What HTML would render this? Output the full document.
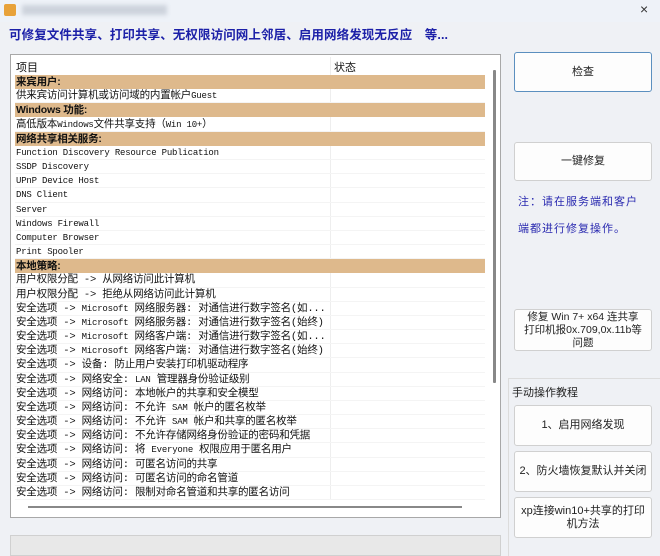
<!DOCTYPE html>
<html><head><meta charset="utf-8"><style>
*{margin:0;padding:0;box-sizing:border-box}
body{width:660px;height:556px;background:#eff1f5;font-family:"Liberation Sans","Noto Sans CJK SC",sans-serif;position:relative;overflow:hidden;color:#111}
.a{position:absolute}
.title{left:0;top:0;width:660px;height:22px;background:#eef2f8}
.head{left:9px;top:24px;font-size:12.5px;font-weight:bold;color:#1c20a8;letter-spacing:0.1px;white-space:nowrap}
.list{left:10px;top:54px;width:491px;height:464px;background:#fff;border:1px solid #a8a8a8}
.row{position:absolute;left:5px;width:470px;height:14.17px;font-size:10.5px;line-height:14px;white-space:nowrap;font-family:"Liberation Mono","Noto Sans CJK SC",monospace;padding-left:1px;border-bottom:1px solid #f4f4f4;letter-spacing:-0.2px}
.band{background:#deb98c;font-weight:bold;font-family:"Liberation Sans","Noto Sans CJK SC",sans-serif;border-bottom:none}
.m{font-family:"Liberation Mono",monospace;font-size:9px}
.btn{position:absolute;left:514px;width:138px;background:#fdfdfd;border:1px solid #d0d0d0;border-radius:3px;font-size:11px;text-align:center;display:flex;align-items:center;justify-content:center;line-height:13px;color:#222}
.note{left:518px;font-size:11px;color:#2a2ab0;letter-spacing:1px}
</style></head><body>
<div class="a title"></div>
<div class="a" style="left:4px;top:4px;width:12px;height:12px;background:#e8a23a;border-radius:2px"></div>
<div class="a" style="left:22px;top:5px;width:145px;height:10px;background:#cdd3dc;filter:blur(2px)"></div>
<div class="a" style="left:640px;top:1px;font-size:14px;color:#333">×</div>
<div class="a head">可修复文件共享、打印共享、无权限访问网上邻居、启用网络发现无反应　等...</div>
<div class="a list">
<div class="a" style="left:5px;top:4px;font-size:11px">项目</div>
<div class="a" style="left:323px;top:4px;font-size:11px">状态</div>
<div class="a" style="left:319px;top:2px;width:1px;height:442px;background:#eee"></div>
<div class="a" style="left:482px;top:15px;width:3px;height:313px;background:#888;border-radius:1px"></div>
<div class="a" style="left:17px;top:451px;width:434px;height:2px;background:#888"></div>
</div>
<div class="a" style="left:10px;top:535px;width:491px;height:21px;background:#e8e8e8;border:1px solid #d0d0d0"></div>

<div class="btn" style="top:52px;height:40px;border-color:#5b8fbf">检查</div>
<div class="btn" style="top:142px;height:39px">一键修复</div>
<div class="a note" style="top:193px">注：请在服务端和客户</div>
<div class="a note" style="top:220px">端都进行修复操作。</div>
<div class="btn" style="top:309px;height:42px;font-size:10.5px">修复 Win 7+ x64 连共享<br>打印机报0x.709,0x.11b等<br>问题</div>
<div class="a" style="left:508px;top:378px;width:152px;height:178px;border:1px solid #dcdcdc;border-right:none;border-bottom:none"></div>
<div class="a" style="left:512px;top:384px;font-size:11px;background:#eff1f5;color:#222">手动操作教程</div>
<div class="btn" style="top:405px;height:41px">1、启用网络发现</div>
<div class="btn" style="top:451px;height:41px">2、防火墙恢复默认并关闭</div>
<div class="btn" style="top:497px;height:41px">xp连接win10+共享的打印<br>机方法</div>

<div class="a" style="left:10px;top:54px">
<div class="row band" style="top:21px">来宾用户:</div>
<div class="row" style="top:35.2px">供来宾访问计算机或访问域的内置帐户<span class="m">Guest</span></div>
<div class="row band" style="top:49.3px">Windows 功能:</div>
<div class="row" style="top:63.5px">高低版本<span class="m">Windows</span>文件共享支持（<span class="m">Win 10+</span>）</div>
<div class="row band" style="top:77.7px">网络共享相关服务:</div>
<div class="row m" style="top:91.9px">Function Discovery Resource Publication</div>
<div class="row m" style="top:106px">SSDP Discovery</div>
<div class="row m" style="top:120.2px">UPnP Device Host</div>
<div class="row m" style="top:134.4px">DNS Client</div>
<div class="row m" style="top:148.5px">Server</div>
<div class="row m" style="top:162.7px">Windows Firewall</div>
<div class="row m" style="top:176.9px">Computer Browser</div>
<div class="row m" style="top:191px">Print Spooler</div>
<div class="row band" style="top:205.2px">本地策略:</div>
<div class="row" style="top:219.4px">用户权限分配 -&gt; 从网络访问此计算机</div>
<div class="row" style="top:233.5px">用户权限分配 -&gt; 拒绝从网络访问此计算机</div>
<div class="row" style="top:247.7px">安全选项 -&gt; <span class="m">Microsoft</span> 网络服务器: 对通信进行数字签名(如...</div>
<div class="row" style="top:261.9px">安全选项 -&gt; <span class="m">Microsoft</span> 网络服务器: 对通信进行数字签名(始终)</div>
<div class="row" style="top:276px">安全选项 -&gt; <span class="m">Microsoft</span> 网络客户端: 对通信进行数字签名(如...</div>
<div class="row" style="top:290.2px">安全选项 -&gt; <span class="m">Microsoft</span> 网络客户端: 对通信进行数字签名(始终)</div>
<div class="row" style="top:304.4px">安全选项 -&gt; 设备: 防止用户安装打印机驱动程序</div>
<div class="row" style="top:318.5px">安全选项 -&gt; 网络安全: <span class="m">LAN</span> 管理器身份验证级别</div>
<div class="row" style="top:332.7px">安全选项 -&gt; 网络访问: 本地帐户的共享和安全模型</div>
<div class="row" style="top:346.9px">安全选项 -&gt; 网络访问: 不允许 <span class="m">SAM</span> 帐户的匿名枚举</div>
<div class="row" style="top:361px">安全选项 -&gt; 网络访问: 不允许 <span class="m">SAM</span> 帐户和共享的匿名枚举</div>
<div class="row" style="top:375.2px">安全选项 -&gt; 网络访问: 不允许存储网络身份验证的密码和凭据</div>
<div class="row" style="top:389.4px">安全选项 -&gt; 网络访问: 将 <span class="m">Everyone</span> 权限应用于匿名用户</div>
<div class="row" style="top:403.5px">安全选项 -&gt; 网络访问: 可匿名访问的共享</div>
<div class="row" style="top:417.7px">安全选项 -&gt; 网络访问: 可匿名访问的命名管道</div>
<div class="row" style="top:431.9px">安全选项 -&gt; 网络访问: 限制对命名管道和共享的匿名访问</div>
</div>
</body></html>
